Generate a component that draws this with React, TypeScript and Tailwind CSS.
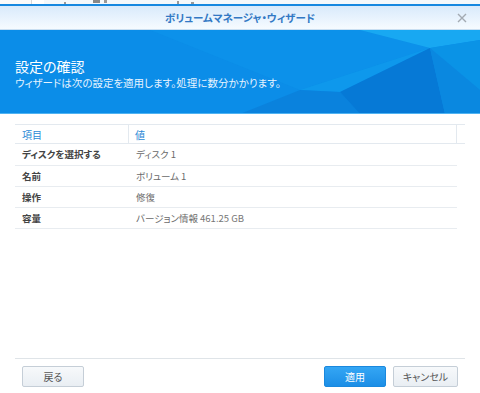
import React from "react";

const font = { fontFamily: '"Noto Sans CJK JP", "Noto Sans", sans-serif' };

function Banner() {
  return (
    <div className="relative h-[84px] bg-[#0b8de8] overflow-hidden">
      <svg className="absolute inset-0" width="480" height="84" viewBox="0 0 480 84">
        <polygon points="150,0 360,0 430,18 300,60" fill="#0e96ec" opacity="0.5" />
        <polygon points="360,0 480,0 480,10 430,18" fill="#18a8f2" />
        <polygon points="430,18 480,10 480,60" fill="#0a93e6" />
        <polygon points="300,60 430,18 340,62" fill="#10a0ee" opacity="0.6" />
        <polygon points="240,84 300,60 340,62 360,84" fill="#0a82dd" />
        <polygon points="340,62 430,18 445,84 360,84" fill="#0679d6" />
        <polygon points="430,18 480,60 480,84 445,84" fill="#0a88e0" />
      </svg>
      <div className="relative pl-[15px] pt-[27px] text-white">
        <div className="text-[14px] leading-[18px]">設定の確認</div>
        <div className="mt-[1px] text-[10.5px] leading-[14px] text-[#e6f3ff]">
          ウィザードは次の設定を適用します。処理に数分かかります。
        </div>
      </div>
      <div className="absolute left-0 right-0 bottom-0 h-px bg-[#4fb3f2]" />
    </div>
  );
}

const rows: [string, React.ReactNode][] = [
  ["ディスクを選択する", "ディスク 1"],
  ["名前", "ボリューム 1"],
  ["操作", "修復"],
  [
    "容量",
    <>
      バージョン情報 <span className="text-[#777]">461.25 GB</span>
    </>,
  ],
];

export default function App() {
  return (
    <div
      className="w-[480px] h-[393px] bg-white flex flex-col overflow-hidden [font-feature-settings:'palt']"
      style={font}
    >
      {/* background strip */}
      <div className="h-[4px] flex bg-white">
        <div className="w-[31px] bg-[#fafafa]" />
        <div className="w-px bg-[#d6d6d6]" />
        <div className="w-[12px] bg-white" />
        <div className="flex-1 bg-[#f4f8fb] flex items-start">
          <div className="ml-[20px] mt-[2px] w-[2px] h-[2px] bg-[#999]" />
          <div className="ml-[27px] w-[7px] h-[3px] bg-[#888]" />
          <div className="ml-[4px] w-[3px] h-[3px] bg-[#999]" />
          <div className="ml-[70px] mt-[1px] w-[2px] h-[3px] bg-[#999]" />
          <div className="ml-[12px] mt-[2px] w-[3px] h-[2px] bg-[#999]" />
        </div>
      </div>
      <div className="h-[2px] bg-[#1688e0]" />
      {/* title bar */}
      <div className="h-[24px] bg-gradient-to-b from-[#d9eafb] to-[#f6fbff] flex items-center justify-center relative border-b border-[#c9dff2]">
        <span className="text-[10.5px] font-bold text-[#3278c4]">
          ボリュームマネージャ・ウィザード
        </span>
        <svg className="absolute right-[13px] top-[7px]" width="10" height="10" viewBox="0 0 10 10">
          <path d="M1 1L9 9M9 1L1 9" stroke="#a3aab2" strokeWidth="1.4" />
        </svg>
      </div>
      <Banner />
      {/* content */}
      <div className="flex-1 px-[15px] pt-[10px]">
        <div className="w-[450px] h-[20px] flex border-t border-b border-[#e3e9ef] text-[10px] text-[#2b8ad6]">
          <div className="w-[114px] border-r border-[#e3e9ef] pl-[7px] flex items-center">項目</div>
          <div className="w-[328px] border-r border-[#e3e9ef] pl-[6px] flex items-center">値</div>
          <div className="flex-1" />
        </div>
        {rows.map(([k, v], i) => (
          <div
            key={i}
            className={`w-[442px] flex items-center border-b border-[#e8ecf0] text-[9.5px] ${i === 0 ? "h-[22px]" : "h-[21px]"}`}
          >
            <div className="w-[114px] pl-[7px] font-bold text-[#444]">{k}</div>
            <div className="pl-[7px] text-[#6a6a6a]">{v}</div>
          </div>
        ))}
      </div>
      {/* footer */}
      <div className="px-[15px]">
        <div className="h-px bg-[#dfe4e8]" />
        <div className="h-[34px] flex items-start pt-[7px] px-[7px]">
          <button className="w-[62px] h-[21px] rounded-[2px] border border-[#c5ced7] bg-gradient-to-b from-[#f7f9fb] to-[#e9eef3] text-[10px] text-[#555]">
            戻る
          </button>
          <div className="flex-1" />
          <button className="w-[62px] h-[21px] rounded-[2px] border border-[#1a88dd] bg-gradient-to-b from-[#34a6f4] to-[#1b8ee6] text-[10px] text-white">
            適用
          </button>
          <button className="ml-[7px] w-[65px] h-[21px] rounded-[2px] border border-[#c5ced7] bg-gradient-to-b from-[#f7f9fb] to-[#e9eef3] text-[10px] text-[#555]">
            キャンセル
          </button>
        </div>
      </div>
    </div>
  );
}
